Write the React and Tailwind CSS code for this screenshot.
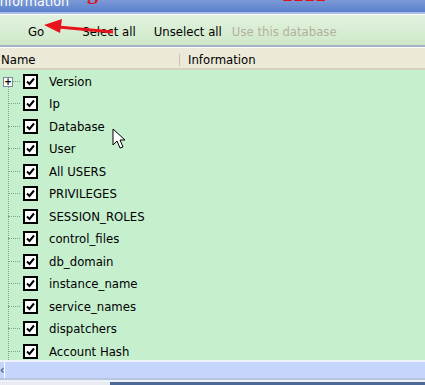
import React from "react";

const items = [
  "Version",
  "Ip",
  "Database",
  "User",
  "All USERS",
  "PRIVILEGES",
  "SESSION_ROLES",
  "control_files",
  "db_domain",
  "instance_name",
  "service_names",
  "dispatchers",
  "Account Hash",
];

function Check() {
  return (
    <div className="w-[15px] h-[15px] border-2 border-black bg-white flex items-center justify-center">
      <svg width="9" height="9" viewBox="0 0 9 9">
        <path d="M1 4.5 L3.5 7 L8 1.5" fill="none" stroke="black" strokeWidth="2" />
      </svg>
    </div>
  );
}

export default function App() {
  return (
    <div
      className="relative w-[425px] h-[385px] overflow-hidden bg-white text-[13px] text-black"
      style={{ fontFamily: "Tahoma, 'DejaVu Sans Condensed', 'Liberation Sans', sans-serif" }}
    >
      {/* title bar */}
      <div className="h-[12px] overflow-hidden bg-gradient-to-b from-[#7d9ad6] to-[#5a80cc] relative">
        <div className="text-white text-[14px] leading-[14px] -mt-[6px] -ml-[4px]">Information</div>
      </div>
      <div className="h-[2px] bg-[#a9bde6]" />
      <div className="h-[1px] bg-white" />

      {/* toolbar */}
      <div className="h-[30px] bg-gradient-to-b from-[#e2f2df] to-[#cfe8c8] flex items-center pt-[3px]">
        <span className="ml-[28px]">Go</span>
        <span className="ml-[38px]">Select all</span>
        <span className="ml-[18px]">Unselect all</span>
        <span className="ml-[10px] text-[#b4b09e]">Use this database</span>
      </div>
      <div className="h-[2px] bg-[#a4b2c6]" />
      <div className="h-[1px] bg-white" />

      {/* header */}
      <div className="h-[20px] bg-[#ece9d8] flex items-center pt-[3px]">
        <span className="ml-[1px] w-[178px]">Name</span>
        <div className="w-px h-[12px] bg-[#c8c3b0] mr-[8px]" />
        <span>Information</span>
      </div>
      <div className="h-[2px] bg-[#d6d2c0]" />

      {/* tree list */}
      <div className="relative h-[290px] bg-[#c6efce]">
        <div className="absolute left-[8px] top-[14px] bottom-0 border-l border-dotted border-[#8a9a8e]" />
        {items.map((t, i) => (
          <div key={t} className="relative h-[22.5px] flex items-center">
            <div className="w-[12px] ml-[8px] border-t border-dotted border-[#8a9a8e]" />
            {i === 0 && (
              <div className="absolute left-[3px] top-[7px] w-[10px] h-[10px] border border-[#7a8a9a] bg-white flex items-center justify-center text-[10px] leading-none font-bold">
                +
              </div>
            )}
            <div className="ml-[3px]">
              <Check />
            </div>
            <span className="ml-[11px]">{t}</span>
          </div>
        ))}
      </div>

      {/* horizontal scrollbar */}
      <div className="h-[2px] bg-[#eef3fb]" />
      <div className="h-[16px] bg-[#c4d4fb] flex items-center">
        <div className="w-[13px] h-full flex items-center justify-center text-[#4a5a80] text-[12px] font-bold border-r border-white">
          ‹
        </div>
        <div className="flex-1 h-full bg-[#c6d5fc] flex items-center justify-center pl-[430px]">
          <div className="flex gap-[2px]">
            <div className="w-px h-[8px] bg-[#8da6e6]" />
            <div className="w-px h-[8px] bg-[#8da6e6]" />
            <div className="w-px h-[8px] bg-[#8da6e6]" />
            <div className="w-px h-[8px] bg-[#8da6e6]" />
          </div>
        </div>
      </div>
      <div className="h-[2px] bg-[#b8c6e0]" />
      <div className="h-[2px] bg-[#eef1f6]" />
      <div className="flex h-[4px]">
        <div className="w-[110px] bg-[#e8ecf2]" />
        <div className="flex-1 bg-[#4d6a96]" />
      </div>

      {/* red annotations overlay */}
      <div
        className="absolute left-[87px] -top-[19px] text-[#e0101a] text-[22px] leading-none font-bold"
        style={{ fontFamily: "'Liberation Serif', serif" }}
      >
        g
      </div>
      <div
        className="absolute left-[283px] -top-[20px] text-[#e0101a] text-[26px] leading-none font-bold tracking-[2px]"
        style={{ fontFamily: "'Liberation Serif', serif" }}
      >
        HH
      </div>
      <svg className="absolute left-0 top-0" width="425" height="60">
        <line x1="113" y1="32" x2="58" y2="27" stroke="#e8141c" strokeWidth="3" />
        <polygon points="44,25 62,19 60,33" fill="#e8141c" />
      </svg>

      {/* mouse cursor */}
      <svg className="absolute left-[112px] top-[128px]" width="16" height="24" viewBox="0 0 16 24">
        <path
          d="M1 1 L1 17 L5 13 L8 20 L11 19 L8 12 L13 12 Z"
          fill="white"
          stroke="black"
          strokeWidth="1"
          strokeLinejoin="miter"
        />
      </svg>
    </div>
  );
}
